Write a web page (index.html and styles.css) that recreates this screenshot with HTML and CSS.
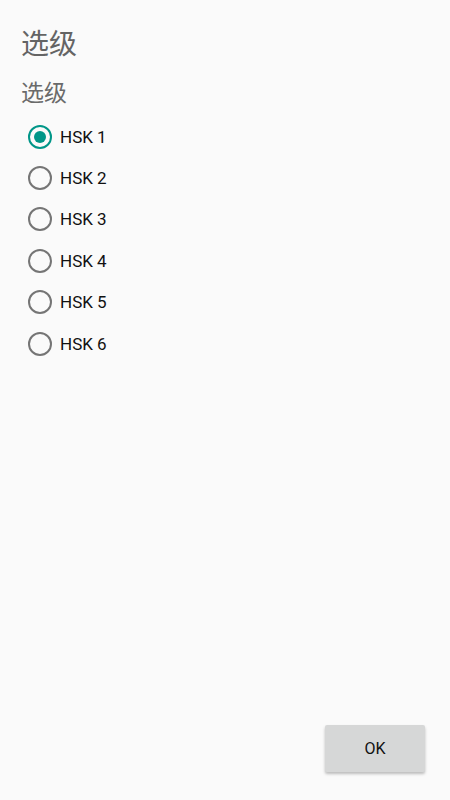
FILE: index.html
```html
<!DOCTYPE html>
<html lang="zh">
<head>
    <meta charset="UTF-8">
    <title>选级</title>
    <link rel="stylesheet" href="styles.css">
</head>
<body>
    <div id="page">
        <h1 class="title">选级</h1>
        <h2 class="subtitle">选级</h2>
        <ul id="levels">
            <li class="checked"><span class="radio"></span>HSK 1</li>
            <li><span class="radio"></span>HSK 2</li>
            <li><span class="radio"></span>HSK 3</li>
            <li><span class="radio"></span>HSK 4</li>
            <li><span class="radio"></span>HSK 5</li>
            <li><span class="radio"></span>HSK 6</li>
        </ul>
        <div class="bottom">
            <button id="ok">OK</button>
        </div>
    </div>
</body>
</html>
```

FILE: styles.css
```css
*{
    margin: 0;
    padding: 0;
}
li{
    list-style: none;
}
html,body{
    height: 100%;
}
body{
    background: #fafafa;
    font-family: Roboto, "Noto Sans CJK SC", sans-serif;
}

#page{
    display: flex;
    flex-direction: column;
    height: 100%;
    box-sizing: border-box;
    padding: 27px 24px 0 21px;
}

.title{
    font-size: 28px;
    font-weight: normal;
    color: #646464;
    line-height: 36px;
}
.subtitle{
    font-size: 23px;
    font-weight: normal;
    color: #6a6a6a;
    line-height: 30px;
    margin-top: 16px;
}

#levels{
    margin-top: 7px;
    padding-left: 7px;
}
#levels li{
    display: flex;
    align-items: center;
    height: 41.4px;
    font-size: 17px;
    color: #111;
}
.radio{
    width: 20px;
    height: 20px;
    border: 2px solid #757575;
    border-radius: 50%;
    margin-right: 8px;
    display: flex;
    align-items: center;
    justify-content: center;
}
#levels .checked .radio{
    border-color: #009688;
}
#levels .checked .radio:after{
    content: "";
    width: 12px;
    height: 12px;
    border-radius: 50%;
    background: #009688;
}

.bottom{
    margin-top: auto;
    display: flex;
    justify-content: flex-end;
    padding-bottom: 28px;
}
#ok{
    width: 100px;
    height: 47px;
    border: none;
    border-radius: 2px;
    background: #d6d7d7;
    box-shadow: 0 2px 3px rgba(0,0,0,0.25);
    font-family: Roboto, sans-serif;
    font-size: 16px;
    color: #111;
    margin-right: 1px;
}
```
